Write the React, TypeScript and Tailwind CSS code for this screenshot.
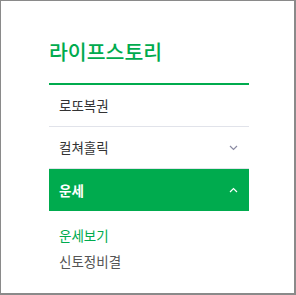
import React from "react";

const font = { fontFamily: '"Noto Sans CJK KR", "Noto Sans", sans-serif' };

function Chevron({ up, color }: { up?: boolean; color: string }) {
  return (
    <svg width="9" height="6" viewBox="0 0 9 6" fill="none">
      <path
        d={up ? "M1 5 L4.5 1.5 L8 5" : "M1 1 L4.5 4.5 L8 1"}
        stroke={color}
        strokeWidth="1.2"
      />
    </svg>
  );
}

export default function App() {
  return (
    <div
      className="w-[296px] h-[295px] bg-white border-t border-l border-r-2 border-b-2 border-[#8a8a8a]"
      style={font}
    >
      <div className="ml-[48px] w-[200px]">
        <h2 className="pt-[35px] pb-[17px] border-b-2 border-[#00ab4e] text-[20.5px] leading-[30px] font-medium text-[#00ab4e]">
          라이프스토리
        </h2>
        <ul className="text-[13.5px]">
          <li className="h-[42px] border-b border-[#e1e3ea] pl-[10px] flex items-center text-[#333]">
            로또복권
          </li>
          <li className="h-[42px] border-b border-[#e1e3ea] pl-[10px] pr-[11px] flex items-center justify-between text-[#333]">
            <span>컬쳐홀릭</span>
            <Chevron color="#8b8ba3" />
          </li>
          <li className="h-[42px] bg-[#00ab4e] pl-[10px] pr-[11px] flex items-center justify-between text-white font-bold">
            <span>운세</span>
            <Chevron up color="#ffffff" />
          </li>
        </ul>
        <ul className="pt-[11px] pl-[10px] text-[13.5px]">
          <li className="h-[26px] leading-[26px] text-[#00ab4e]">운세보기</li>
          <li className="h-[26px] leading-[26px] text-[#555]">신토정비결</li>
        </ul>
      </div>
    </div>
  );
}
